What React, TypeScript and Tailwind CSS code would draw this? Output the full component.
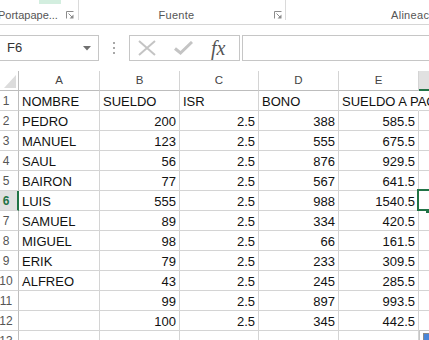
import React from 'react';

const rows: (string | number)[][] = [
  ['NOMBRE', 'SUELDO', 'ISR', 'BONO', 'SUELDO A PAGAR'],
  ['PEDRO', 200, 2.5, 388, 585.5],
  ['MANUEL', 123, 2.5, 555, 675.5],
  ['SAUL', 56, 2.5, 876, 929.5],
  ['BAIRON', 77, 2.5, 567, 641.5],
  ['LUIS', 555, 2.5, 988, 1540.5],
  ['SAMUEL', 89, 2.5, 334, 420.5],
  ['MIGUEL', 98, 2.5, 66, 161.5],
  ['ERIK', 79, 2.5, 233, 309.5],
  ['ALFREO', 43, 2.5, 245, 285.5],
  ['', 99, 2.5, 897, 993.5],
  ['', 100, 2.5, 345, 442.5],
  ['', '', '', '', ''],
];

const colW = ['w-[81px]', 'w-[80px]', 'w-[79px]', 'w-[80px]', 'w-[80px]'];
const letters = ['A', 'B', 'C', 'D', 'E'];

const Launcher = () => (
  <svg width="8" height="8" viewBox="0 0 8 8" className="shrink-0">
    <path d="M0.5 7.5V0.5H7.5" fill="none" stroke="#8c8c8c" />
    <path d="M2.5 2.5L6 6" stroke="#8c8c8c" />
    <path d="M7.5 3.5V7.5H3.5Z" fill="#8c8c8c" />
  </svg>
);

export default function App() {
  return (
    <div className="w-[429px] h-[340px] overflow-hidden bg-white font-['Liberation_Sans',Arial,sans-serif]">
      {/* Ribbon group labels */}
      <div className="flex h-[25px] border-b border-[#d6d6d6] text-[11px] text-[#555] overflow-hidden">
        <div className="w-[78px] shrink-0 flex flex-col">
          <div className="ml-[39px] w-[22px] h-[4px] bg-[#d3eedf]" />
          <div className="mt-auto mb-[3px] h-[12px] flex items-center justify-between pr-[4px] leading-none">
            <span className="ml-[-2px] whitespace-nowrap">Portapape...</span>
            <Launcher />
          </div>
        </div>
        <div className="w-px h-[20px] bg-[#dadada] shrink-0" />
        <div className="w-[206px] shrink-0 flex flex-col">
          <div className="mt-auto mb-[3px] h-[12px] flex items-center pr-[3px] leading-none">
            <span className="flex-1 text-center tracking-[0.3px]">Fuente</span>
            <Launcher />
          </div>
        </div>
        <div className="w-px h-[20px] bg-[#dadada] shrink-0" />
        <div className="flex-1 flex flex-col">
          <div className="mt-auto mb-[3px] h-[12px] flex items-center pl-[105px] leading-none whitespace-nowrap tracking-[0.3px]">
            Alineación
          </div>
        </div>
      </div>

      {/* Formula bar */}
      <div className="flex mt-[10px] h-[26px]">
        <div className="ml-[-1px] w-[100px] shrink-0 border border-[#c6c6c6] flex items-center justify-between pl-[7px] pr-[7px] text-[13px] text-[#333]">
          <span>F6</span>
          <svg width="8" height="5" viewBox="0 0 8 5">
            <path d="M0 0H8L4 4.5Z" fill="#707070" />
          </svg>
        </div>
        <div className="w-[30px] shrink-0 flex flex-col items-center justify-center gap-[3px]">
          <div className="w-[2px] h-[2px] bg-[#a8a8a8]" />
          <div className="w-[2px] h-[2px] bg-[#a8a8a8]" />
          <div className="w-[2px] h-[2px] bg-[#a8a8a8]" />
        </div>
        <div className="w-[111px] shrink-0 border border-[#c6c6c6] flex items-center pl-[8px]">
          <svg width="18" height="16" viewBox="0 0 18 16">
            <path d="M1 1L17 15M17 1L1 15" stroke="#c4c4c4" strokeWidth="2" />
          </svg>
          <svg width="19" height="14" viewBox="0 0 19 14" className="ml-[18px]">
            <path d="M1 7.5L6.5 12L18 1" fill="none" stroke="#c4c4c4" strokeWidth="3" />
          </svg>
          <span className="ml-[18px] font-['Liberation_Serif',serif] italic text-[20px] leading-none text-[#555]">fx</span>
        </div>
        <div className="ml-[2px] flex-1 mr-[-2px] border border-[#c6c6c6]" />
      </div>

      {/* Grid */}
      <div className="relative mt-[10px]">
        {/* column headers */}
        <div className="flex h-[20px] text-[11.5px] text-[#444]">
          <div className="w-[19px] shrink-0 border-r border-b border-[#bdbdbd] flex items-end justify-end pb-[2px] pr-[2px]">
            <svg width="12" height="13" viewBox="0 0 12 13">
              <path d="M12 0V13H0Z" fill="#dcdcdc" />
            </svg>
          </div>
          {letters.map((l, i) => (
            <div
              key={l}
              className={`${colW[i]} shrink-0 border-r border-b border-[#d4d4d4] border-b-[#bdbdbd] flex items-end justify-center pb-[4px] leading-none`}
            >
              {l}
            </div>
          ))}
          <div className="flex-1 bg-[#e1e1e1] border-b-2 border-[#217346]" />
        </div>

        {/* rows */}
        {rows.map((r, ri) => {
          const selected = ri === 5;
          return (
            <div key={ri} className="flex h-[20px] text-[13px] text-[#111]">
              <div
                className={`w-[19px] shrink-0 border-b border-[#d4d4d4] overflow-hidden flex items-end pb-[3px] leading-none text-[12px] ${
                  selected
                    ? 'bg-[#e1e1e1] border-r-2 border-r-[#217346] text-[#217346] font-bold'
                    : 'border-r border-r-[#bdbdbd] text-[#555]'
                }`}
              >
                <span className="ml-[-6px] w-[24px] shrink-0 text-center">{ri + 1}</span>
              </div>
              {r.map((v, ci) => {
                const isNum = typeof v === 'number';
                const overflow = ri === 0 && ci === 4;
                return (
                  <div
                    key={ci}
                    className={`${colW[ci]} shrink-0 border-b border-[#d4d4d4] flex items-end pb-[2px] leading-none whitespace-nowrap ${
                      overflow ? 'border-r border-r-transparent' : 'border-r'
                    } ${isNum ? 'justify-end pr-[3px]' : 'justify-start pl-[3px]'}`}
                  >
                    {v}
                  </div>
                );
              })}
              <div className="flex-1 border-b border-[#d4d4d4]" />
            </div>
          );
        })}

        {/* active cell F6 */}
        <div className="absolute left-[417px] top-[118px] w-[20px] h-[22px] border-2 border-[#217346]" />
        <div className="absolute left-[426px] top-[139px] w-[4px] h-[3px] bg-[#217346]" />

        {/* quick analysis button */}
        <div className="absolute left-[419px] top-[259px] w-[12px] h-[12px] border border-[#c6c6c6] bg-white">
          <div className="ml-[3px] mt-[2px] w-[8px] h-[8px] border border-[#8a8a8a] bg-[#4a86d8]" />
        </div>
      </div>
    </div>
  );
}
